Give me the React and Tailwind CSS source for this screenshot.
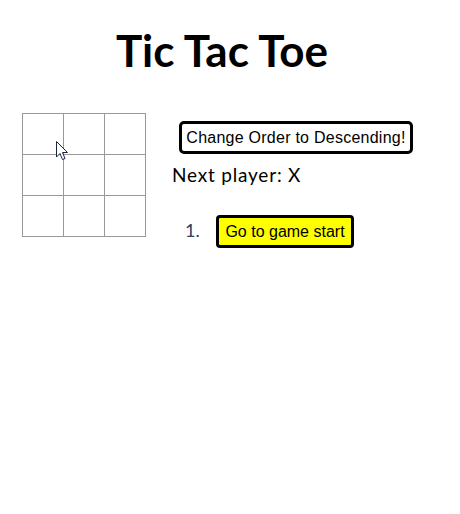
import React from "react";

function Square() {
  return <button className="w-[42px] h-[42px] -mr-px -mt-px border border-[#999] bg-white p-0 block" />;
}

const arial = { fontFamily: '"Liberation Sans", Arial, sans-serif' };

export default function App() {
  const rows = [0, 1, 2];
  return (
    <div className="relative w-[460px] h-[514px] bg-white text-black" style={{ fontFamily: '"Century Gothic", Lato, "Open Sans", sans-serif' }}>
      <h1 className="text-center text-[44px] font-bold leading-none pt-[28px] pr-[16px] m-0">Tic Tac Toe</h1>
      <div className="flex items-start mt-[41px] pl-[22px]">
        <div className="pt-[1px]">
          {rows.map((r) => (
            <div key={r} className="flex">
              <Square />
              <Square />
              <Square />
            </div>
          ))}
        </div>
        <div className="ml-[27px] pt-[8px]">
          <button className="ml-[7px] w-[234px] border-[3px] border-black rounded-[5px] bg-white p-0 h-[33px] text-[16px] leading-none tracking-[0.25px]" style={arial}>
            Change Order to Descending!
          </button>
          <div className="text-[19px] leading-none tracking-[0.8px] mt-[11px]">Next player: X</div>
          <ol className="list-none p-0 m-0 mt-[31px]">
            <li className="flex items-center">
              <span className="w-[44px] pl-[13px] text-[18px] leading-none text-[#2b4060] -mt-[3px]">1.</span>
              <button className="w-[138px] border-[3px] border-black rounded-[4px] bg-[#ffff00] p-0 h-[33px] text-[16px] leading-none text-black" style={arial}>
                Go to game start
              </button>
            </li>
          </ol>
        </div>
      </div>
      <svg className="absolute left-[56px] top-[141px]" width="13" height="21" viewBox="0 0 13 21">
        <path d="M0.5 0.5 L0.5 16 L4 12.5 L6.5 18.5 L9 17.5 L6.5 11.5 L11.5 11.5 Z" fill="white" stroke="#1a2440" strokeWidth="1" strokeLinejoin="miter" />
      </svg>
    </div>
  );
}
